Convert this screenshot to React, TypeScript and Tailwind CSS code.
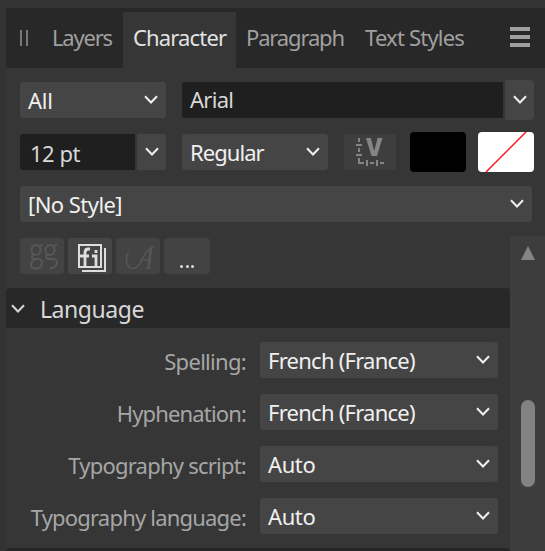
import React from "react";

function Label({ children, className = "" }: { children: React.ReactNode; className?: string }) {
  return <span className={`block whitespace-nowrap leading-[30px] ${className}`}>{children}</span>;
}

function Chevron({ color = "#f0f0f0" }: { color?: string }) {
  return (
    <svg width="14" height="10" viewBox="0 0 14 10" fill="none" className="block shrink-0">
      <path d="M1 1.3 L7 7.5 L13 1.3" stroke={color} strokeWidth="2" />
    </svg>
  );
}

function Select({ text, className, textClass = "" }: { text: string; className: string; textClass?: string }) {
  return (
    <div className={`flex h-9 shrink-0 justify-between rounded-[3px] bg-[#454545] pl-2 pr-2 text-[#f0f0f0] ${className}`}>
      <Label className={`pt-[3px] ${textClass}`}>{text}</Label>
      <div className="pt-[13px]"><Chevron /></div>
    </div>
  );
}

function LanguageRow({ label, value, labelClass, valueClass }: { label: string; value: string; labelClass: string; valueClass: string }) {
  return (
    <div className="flex h-9 justify-end pr-3">
      <Label className={`mr-[14px] pt-[4px] text-[#a6a6a6] ${labelClass}`}>{label}</Label>
      <Select text={value} className="w-[238px]" textClass={valueClass} />
    </div>
  );
}

export default function App() {
  return (
    <div className="h-[551px] w-[545px] overflow-hidden bg-[#333333] pl-[6px] pt-2 font-['Noto_Sans',sans-serif] text-[22px]">
      <div className="flex h-[543px] flex-col bg-[#363636]">
        <div className="flex h-[60px] shrink-0 bg-[#282828] text-[#a0a0a0]">
          <div className="ml-[14px] mt-[22px] flex h-4 w-2 justify-between">
            <div className="w-[2px] bg-[#777]" />
            <div className="w-[2px] bg-[#777]" />
          </div>
          <Label className="ml-[24px] w-[71px] pt-[14px] tracking-[-1.2px]">Layers</Label>
          <div className="mt-1 w-[113px] bg-[#363636] pl-[10px] text-[#e2e2e2]">
            <Label className="pt-[10px] tracking-[-0.85px]">Character</Label>
          </div>
          <Label className="ml-[10px] w-[119px] pt-[14px] tracking-[-1.15px]">Paragraph</Label>
          <Label className="w-[145px] pt-[14px] tracking-[-0.8px]">Text Styles</Label>
          <div className="mt-[19px] flex h-5 w-5 flex-col justify-between">
            <div className="h-1 bg-[#a0a0a0]" />
            <div className="h-1 bg-[#a0a0a0]" />
            <div className="h-1 bg-[#a0a0a0]" />
          </div>
        </div>

        <div className="mt-3 flex h-10 shrink-0 items-center pl-[14px]">
          <Select text="All" className="w-[146px]" textClass="tracking-[-0.3px]" />
          <div className="ml-4 h-9 w-[321px] rounded-l-[3px] bg-[#1f1f1f] pl-2 text-[#d8d8d8]">
            <Label className="pt-[2px] tracking-[-0.7px]">Arial</Label>
          </div>
          <div className="ml-[2px] flex h-10 w-[29px] justify-center rounded-r-[4px] bg-[#454545] pt-[15px]"><Chevron /></div>
        </div>

        <div className="mt-3 flex h-10 shrink-0 items-center pl-[14px]">
          <div className="h-9 w-[115px] rounded-l-[3px] bg-[#1f1f1f] pl-[10px] text-[#d8d8d8]">
            <Label className="pt-1 tracking-[-0.5px]">12 pt</Label>
          </div>
          <div className="ml-[2px] flex h-9 w-[29px] justify-center rounded-r-[3px] bg-[#454545] pt-[13px]"><Chevron /></div>
          <Select text="Regular" className="ml-4 w-[146px]" textClass="tracking-[-0.95px]" />
          <div className="ml-4 h-9 w-[52px] rounded-[3px] bg-[#3e3e3e]">
            <svg width="52" height="36" viewBox="0 0 52 36">
              <g fill="#858585">
                <path d="M22 4h4.800L30.200 17 33.600 4h4.800L33 22h-5.500z" />
                <path d="M14 4h2v4h-2zM12 10h6v2h-6zM14 14h2v4h-2zM12 20h6v2h-6zM14 24h2v4h4v2h-6zM22 26h2v6h-2zM26 28h4v2h-4zM32 26h2v6h-2zM36 28h4v2h-4z" />
              </g>
            </svg>
          </div>
          <div className="ml-[14px] h-10 w-14 rounded-[4px] bg-black" />
          <div className="ml-3 h-10 w-14 overflow-hidden rounded-[4px] bg-white">
            <svg width="56" height="40"><path d="M8 40 48 0" stroke="#fb1616" strokeWidth="1.5" /></svg>
          </div>
        </div>

        <div className="mt-[14px] flex shrink-0 pl-[14px]"><Select text="[No Style]" className="w-[512px]" textClass="tracking-[-0.55px]" /></div>

        <div className="mt-[14px] flex min-h-0 flex-1">
          <div className="flex w-[504px] shrink-0 flex-col pt-[2px]">
            <div className="flex gap-1 pl-[14px]">
              <div className="h-9 w-11 rounded-[3px] bg-[#434343]">
                <svg width="44" height="36" fill="none" stroke="#575757" strokeWidth="2">
                  <ellipse cx="16" cy="12" rx="4.500" ry="5" />
                  <path d="M19.500 9 Q20.500 6.500 23 7M13.500 16.500 Q10.500 19 13.500 21H18Q22.500 21.500 22 25.500 21 30.500 15.500 30.500 10.500 30.500 11 26.500 11.500 23 15.500 21" />
                  <ellipse cx="30" cy="12" rx="4.500" ry="5" />
                  <path d="M33.500 9 Q34.500 6.500 37 7M27.500 16.500 Q24.500 19 27.500 21H33Q37.500 21.500 37 25.500 36 30 29.500 30.500" />
                </svg>
              </div>
              <div className="h-9 w-11 rounded-[3px] bg-[#454545]">
                <svg width="44" height="36" fill="none" stroke="#dedede" strokeWidth="2">
                  <path d="M11 7h22v22H11zM37 10v23H14" />
                  <path d="M22 11h-2q-3 0-3 4v14M12 18h9M24 18h4v11M28 12v3" strokeWidth="2.800" />
                </svg>
              </div>
              <div className="h-9 w-11 rounded-[3px] bg-[#434343]">
                <svg width="44" height="36" fill="none" stroke="#565656" strokeWidth="1.600">
                  <path d="M13 15Q10 16 10.500 22 11 30.500 17 30.500 22 30.500 27 20 32 9.500 38 8.500" />
                  <path d="M24 22h9M30 30h5" />
                  <path d="M35 10 32.500 30" strokeWidth="2.500" />
                </svg>
              </div>
              <div className="h-9 w-[46px] rounded-[4px] bg-[#434343] pl-[16px] pt-[27px]">
                <div className="flex justify-between pr-4">
                  <span className="h-[3px] w-[3px] rounded-full bg-[#ddd]" /><span className="h-[3px] w-[3px] rounded-full bg-[#ddd]" /><span className="h-[3px] w-[3px] rounded-full bg-[#ddd]" />
                </div>
              </div>
            </div>
            <div className="mt-[14px] flex h-10 shrink-0 rounded-t-[4px] bg-[#282828] pl-[5px] text-[#d8d8d8]">
              <div className="pt-4"><Chevron color="#d8d8d8" /></div>
              <Label className="ml-[15px] pt-[6px] text-[23px] tracking-[-0.45px]">Language</Label>
            </div>
            <div className="mt-[14px] flex shrink-0 flex-col gap-4">
              <LanguageRow label="Spelling:" value="French (France)" labelClass="tracking-[-0.7px]" valueClass="tracking-[-0.75px]" />
              <LanguageRow label="Hyphenation:" value="French (France)" labelClass="tracking-[-0.85px]" valueClass="tracking-[-0.75px]" />
              <LanguageRow label="Typography script:" value="Auto" labelClass="tracking-[-0.77px]" valueClass="tracking-[-0.4px]" />
              <LanguageRow label="Typography language:" value="Auto" labelClass="tracking-[-0.8px]" valueClass="tracking-[-0.4px]" />
            </div>
            <div className="mt-[14px] h-3 shrink-0 rounded-t-[4px] bg-[#282525]" />
          </div>
          <div className="flex flex-1 flex-col bg-[#3d3d3d] pl-[11px] pt-[10px]">
            <svg width="14" height="14" className="block shrink-0"><path d="M7 0 14 14H0z" fill="#858585" /></svg>
            <div className="mt-[140px] h-[87px] w-[14px] shrink-0 rounded-full bg-[#828282]" />
          </div>
        </div>
      </div>
    </div>
  );
}
